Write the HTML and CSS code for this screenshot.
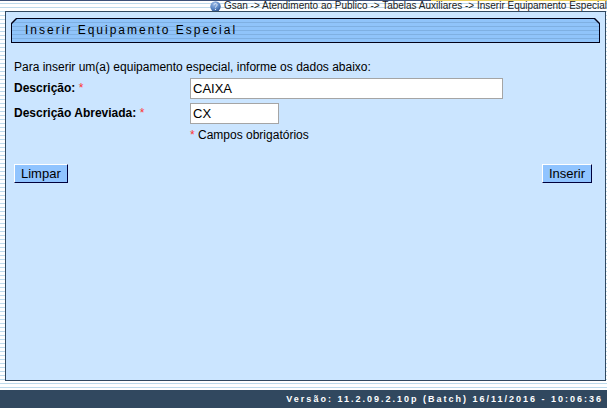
FILE: index.html
```
<!DOCTYPE html>
<html lang="pt-BR">
<head>
    <meta charset="UTF-8">
    <meta name="viewport" content="width=device-width, initial-scale=1.0">
    <title>Inserir Equipamento Especial</title>
    <link rel="stylesheet" href="styles.css">
</head>
<body>
    <div class="top-line"></div>
    <nav class="breadcrumb">
        <svg class="help-icon" viewBox="0 0 11 11" aria-hidden="true">
            <defs>
                <radialGradient id="ball" cx="0.4" cy="0.25" r="0.8">
                    <stop offset="0" stop-color="#9dbbe6"/>
                    <stop offset="0.6" stop-color="#5a86c4"/>
                    <stop offset="1" stop-color="#2b4f8c"/>
                </radialGradient>
            </defs>
            <circle cx="5.5" cy="5.5" r="5.2" fill="url(#ball)"/>
            <path d="M3.9 4.2C3.9 2 7.3 2.1 7.1 4.1C7 5.2 5.5 5.2 5.5 6.6" fill="none" stroke="#dfeaf8" stroke-width="1"/>
            <circle cx="5.5" cy="8.4" r="0.6" fill="#dfeaf8"/>
        </svg>
        <span>Gsan -&gt; Atendimento ao Publico -&gt; Tabelas Auxiliares -&gt; Inserir Equipamento Especial</span>
    </nav>

    <main class="panel">
        <div class="title-bar">
            <h1>Inserir Equipamento Especial</h1>
        </div>

        <form class="form">
            <p class="intro">Para inserir um(a) equipamento especial, informe os dados abaixo:</p>
            <div class="row">
                <label for="descricao">Descrição: <span class="required">*</span></label>
                <input type="text" id="descricao" class="field-long" value="CAIXA">
            </div>
            <div class="row">
                <label for="abreviada">Descrição Abreviada: <span class="required">*</span></label>
                <input type="text" id="abreviada" class="field-short" value="CX">
            </div>
            <p class="note"><span class="required">*</span> Campos obrigatórios</p>
            <div class="buttons">
                <button type="reset">Limpar</button>
                <button type="button">Inserir</button>
            </div>
        </form>
    </main>

    <footer class="footer">Versão: 11.2.09.2.10p (Batch) 16/11/2016 - 10:06:36</footer>
</body>
</html>
```
FILE: styles.css
```
* {
    box-sizing: border-box;
}
body {
    margin: 0;
    min-height: 100vh;
    display: flex;
    flex-direction: column;
    font-family: Arial, "Liberation Sans", sans-serif;
    font-size: 12px;
    line-height: 16px;
    color: #000;
    background: linear-gradient(#fff 75%, #bddaec 75%) 0 0 / 4px 4px;
}
.top-line {
    height: 1px;
    background: linear-gradient(to right, #3c5078 71%, #e8cc5c 71%);
}
.breadcrumb {
    height: 10px;
    display: flex;
    justify-content: flex-end;
    align-items: center;
    gap: 3px;
    font-size: 10px;
    line-height: 10px;
    white-space: nowrap;
    color: #222;
}
.help-icon {
    width: 11px;
    height: 11px;
}
.panel {
    flex: 1;
    margin: 0 1px 9px 5px;
    padding: 6px 5px;
    border: 1px solid #31485f;
    background: #cbe5ff;
}
/* dark shape with a lighter one inside, both with the top corners cut */
.title-bar {
    padding: 1px;
    background: #000018;
    clip-path: polygon(0 5px, 5px 0, calc(100% - 5px) 0, 100% 5px, 100% 100%, 0 100%);
}
.title-bar h1 {
    margin: 0;
    padding: 0 13px;
    font-size: 12px;
    font-weight: normal;
    line-height: 23px;
    letter-spacing: 2px;
    background: linear-gradient(#90c4fa 75%, #7fb0e2 75%) 0 0 / 4px 4px;
    clip-path: polygon(0 5px, 5px 0, calc(100% - 5px) 0, 100% 5px, 100% 100%, 0 100%);
}
.form {
    padding: 16px 8px 0 3px;
}
.intro,
.note {
    margin: 0;
}
.row {
    display: flex;
    margin-top: 4px;
}
.intro + .row {
    margin-top: 3px;
}
.row label {
    width: 176px;
    line-height: 20px;
    font-weight: bold;
}
.required {
    color: #f33;
    font-weight: normal;
}
input {
    height: 21px;
    padding: 1px 2px;
    border: 1px solid #a5a5a5;
    background: #fff;
    font-family: inherit;
    font-size: 13px;
    color: #000;
}
.field-long {
    width: 313px;
}
.field-short {
    width: 89px;
}
.note {
    margin: 3px 0 0 176px;
}
.buttons {
    display: flex;
    justify-content: space-between;
    margin-top: 21px;
}
button {
    height: 19px;
    padding: 0 6px;
    border: 1px solid;
    border-color: #fff #00003c #00003c #fff;
    background: #90c4ff;
    font-family: inherit;
    font-size: 13px;
    line-height: 17px;
    color: #000;
}
.footer {
    height: 18px;
    padding-right: 4px;
    background: #31485f;
    color: #fff;
    font-size: 9px;
    font-weight: bold;
    line-height: 18px;
    letter-spacing: 2px;
    text-align: right;
}
```
